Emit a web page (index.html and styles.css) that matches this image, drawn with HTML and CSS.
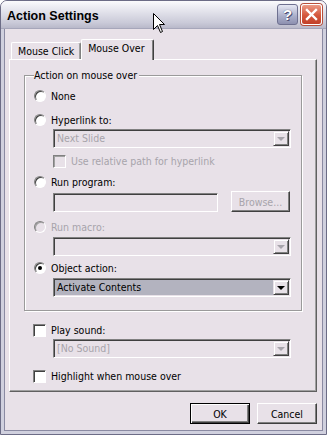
FILE: index.html
```html
<!DOCTYPE html>
<html>
<head>
<meta name="viewport" content="width=device-width, initial-scale=1">
<link rel="stylesheet" href="styles.css">
</head>
<body>
<div class="win">
  <div class="titlebar">
    <span class="title">Action Settings</span>
    <span class="tbtn help">?</span>
    <span class="tbtn close">
      <svg width="13" height="13" viewBox="0 0 13 13"><path d="M2 2 L11 11 M11 2 L2 11" stroke="#fff" stroke-width="2.4" stroke-linecap="square"/></svg>
    </span>
  </div>
  <div class="client">
    <div class="tabs">
      <div class="tab">Mouse Click</div>
      <div class="tab sel">Mouse Over</div>
    </div>
    <div class="panel">
      <div class="grp">
        <span class="grp-label">Action on mouse over</span>
        <div class="row r1"><span class="radio"></span>None</div>
        <div class="row r2"><span class="radio"></span>Hyperlink to:</div>
        <div class="combo off c1"><span class="val">Next Slide</span><span class="arr"><i></i></span></div>
        <div class="row r3 dim"><span class="chk off"></span>Use relative path for hyperlink</div>
        <div class="row r4"><span class="radio"></span>Run program:</div>
        <div class="prow">
          <span class="field"></span>
          <span class="btn off browse">Browse...</span>
        </div>
        <div class="row r5 dim"><span class="radio off"></span>Run macro:</div>
        <div class="combo off c2"><span class="val"></span><span class="arr"><i></i></span></div>
        <div class="row r6"><span class="radio on"></span>Object action:</div>
        <div class="combo c3"><span class="val">Activate Contents</span><span class="arr"><i></i></span></div>
      </div>
      <div class="row r7"><span class="chk"></span>Play sound:</div>
      <div class="combo off c4"><span class="val">[No Sound]</span><span class="arr"><i></i></span></div>
      <div class="row r8"><span class="chk"></span>Highlight when mouse over</div>
    </div>
    <div class="btns">
      <span class="btn def">OK</span>
      <span class="btn">Cancel</span>
    </div>
  </div>
  <svg class="cursor" width="13" height="21" viewBox="0 0 13 21"><path d="M0.5 0.5 L0.5 16.5 L4.5 12.5 L7.5 19.5 L9.5 18.5 L6.5 11.5 L11.5 11.5 Z" fill="#fff" stroke="#000" stroke-width="1"/></svg>
</div>
</body>
</html>
```

FILE: styles.css
```css
html, body { margin: 0; padding: 0; background: #fff; }
* { box-sizing: border-box; }
body { font-family: "DejaVu Sans", sans-serif; font-stretch: condensed; font-size: 10.5px; color: #000; }

.win {
  position: relative;
  width: 327px;
  height: 435px;
  background: #e8e1e8;
  border: 1px solid #6c6c86;
  border-radius: 7px 7px 0 0;
  overflow: hidden;
}

/* title bar */
.titlebar {
  height: 28px;
  display: flex;
  align-items: center;
  padding: 0 4px 0 6px;
  background: linear-gradient(#fbfbfd 0%, #eeeef4 20%, #dcdce6 50%, #cacad8 80%, #b9b9ca 100%);
  border-bottom: 1px solid #a6a6ba;
}
.title {
  flex: 1;
  font-family: "Liberation Sans", Arial, sans-serif;
  font-stretch: normal;
  font-weight: bold;
  font-size: 12.5px;
  padding-top: 3px;
}
.tbtn {
  width: 21px;
  height: 21px;
  border-radius: 3px;
  display: flex;
  align-items: center;
  justify-content: center;
  margin-left: 3px;
}
.help {
  border: 1px solid #6e7090;
  background: linear-gradient(#e6e8f4, #a9adc8 60%, #8d90b0);
  color: #fff;
  font-family: "Liberation Sans", Arial, sans-serif;
  font-weight: bold;
  font-size: 15px;
  text-shadow: 0 0 1px #404060, 1px 1px 0 #50527a;
}
.close {
  border: 1px solid #fff;
  box-shadow: 0 0 0 1px #b8503c;
  background: linear-gradient(#eb9a86, #d4573c 55%, #c2412a);
}

.client {
  height: 405px;
  border: 3px solid #d0d0de;
  border-top: 0;
  box-shadow: inset 1px 0 #8a8aa2, inset -1px 0 #8a8aa2, inset 0 -1px #8a8aa2;
  padding: 10px 6px 0 5px;
}

/* tabs */
.tabs {
  display: flex;
  align-items: flex-end;
  height: 20px;
  padding-left: 2px;
}
.tab {
  height: 17px;
  padding: 2px 6px 0 6px;
  border: 1px solid;
  border-bottom: 0;
  border-color: #fff #808080 #808080 #fff;
  border-radius: 2px 2px 0 0;
  background: #e8e1e8;
  box-shadow: inset -1px 0 #a0a0a0;
}
.tab.sel {
  position: relative;
  z-index: 1;
  height: 21px;
  margin-bottom: -1px;
  padding-top: 2px;
  padding-right: 8px;
  border-right-color: #404040;
  box-shadow: inset -1px 0 #808080;
}

.panel {
  height: 333px;
  border: 1px solid;
  border-color: #fff #606060 #606060 #fff;
  box-shadow: inset -1px -1px #a0a0a0;
  padding: 15px 14px 0 14px;
}

/* group box */
.grp {
  border: 1px solid #9a9a9a;
  box-shadow: inset 1px 1px #fff, 1px 1px #fff;
  height: 236px;
  padding-left: 9px;
  margin-right: 0;
}
.grp-label {
  display: block;
  width: max-content;
  height: 13px;
  line-height: 13px;
  margin-top: -7px;
  padding: 0 2px 0 0;
  background: #e8e1e8;
}

.row {
  display: flex;
  align-items: center;
  height: 16px;
}
.dim { color: #a7a4ab; }
.r1 { margin-top: 6px; }
.r2 { margin-top: 8px; }
.r3 { margin-top: 5px; }
.r4 { margin-top: 5px; }
.r5 { margin-top: 7px; }
.r6 { margin-top: 4px; }
.r7 { margin-top: 11px; padding-left: 9px; }
.r8 { margin-top: 10px; padding-left: 9px; }

.radio {
  width: 12px;
  height: 12px;
  border-radius: 50%;
  border: 1px solid;
  border-color: #808080 #fff #fff #808080;
  box-shadow: inset 1px 1px #404040;
  background: #fff;
  margin-right: 5px;
  display: flex;
  align-items: center;
  justify-content: center;
}
.radio.off { background: #e8e1e8; box-shadow: inset 1px 1px #a0a0a0; }
.radio.on::after {
  content: "";
  width: 4px;
  height: 4px;
  border-radius: 50%;
  background: #000;
}
.chk {
  width: 13px;
  height: 13px;
  border: 1px solid;
  border-color: #808080 #fff #fff #808080;
  box-shadow: inset 1px 1px #404040;
  background: #fff;
  margin-right: 5px;
}
.r3 .chk { margin-left: 19px; margin-right: 5px; }
.chk.off { background: #e8e1e8; box-shadow: inset 1px 1px #a0a0a0; }

/* combos and fields */
.combo, .field {
  display: flex;
  height: 19px;
  border: 1px solid;
  border-color: #808080 #fff #fff #808080;
  box-shadow: inset 1px 1px #404040;
  padding: 1px 1px 1px 1px;
}
.combo {
  width: 238px;
  margin-left: 19px;
}
.combo .val {
  flex: 1;
  padding-left: 2px;
  line-height: 15px;
  background: #e8e1e8;
}
.combo.off .val { color: #a7a4ab; }
.c3 .val { background: #b3b3bf; }
.arr {
  width: 16px;
  height: 15px;
  border: 1px solid;
  border-color: #e8e1e8 #404040 #404040 #e8e1e8;
  box-shadow: inset 1px 1px #fff, inset -1px -1px #808080;
  background: #e8e1e8;
  display: flex;
  align-items: center;
  justify-content: center;
}
.arr i {
  width: 0;
  height: 0;
  border-left: 4px solid transparent;
  border-right: 4px solid transparent;
  border-top: 4px solid #000;
  margin-top: 1px;
}
.combo.off .arr i { border-top-color: #a7a4ab; }
.c1 { margin-top: 1px; }
.c2 { margin-top: 2px; }
.c3 { margin-top: 2px; }
.c4 { margin-top: 1px; margin-left: 29px; }

.prow {
  display: flex;
  align-items: flex-end;
  margin-top: 1px;
  height: 21px;
  padding-left: 19px;
}
.field { width: 165px; background: #e8e1e8; }

.btn {
  display: flex;
  align-items: center;
  justify-content: center;
  height: 21px;
  border: 1px solid;
  border-color: #fff #404040 #404040 #fff;
  box-shadow: inset -1px -1px #808080;
  background: #e8e1e8;
}
.btn.off { color: #a7a4ab; }
.browse { width: 59px; margin-left: 13px; margin-bottom: 0; }

.btns {
  display: flex;
  justify-content: flex-end;
  gap: 7px;
  margin-top: 11px;
}
.btns .btn { width: 60px; }
.btn.def {
  border: 1px solid #000;
  box-shadow: inset 1px 1px #fff, inset -1px -1px #404040, inset -2px -2px #808080;
}

.cursor {
  position: absolute;
  left: 152px;
  top: 12px;
}
```
